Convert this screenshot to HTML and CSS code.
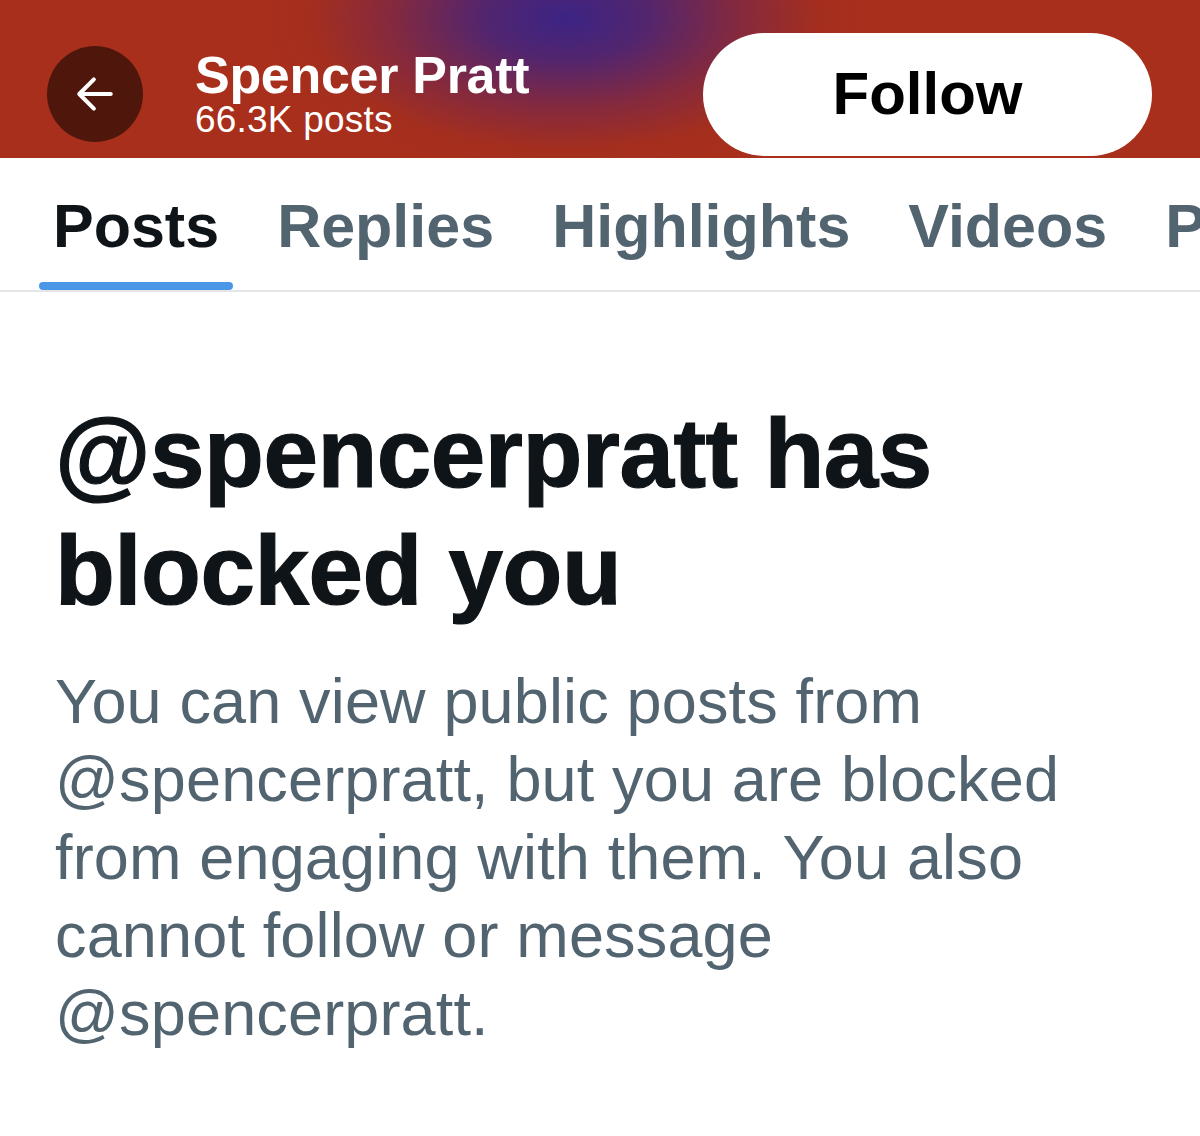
FILE: index.html
```html
<!DOCTYPE html>
<html lang="en">
<head>
<meta charset="utf-8">
<title>Spencer Pratt</title>
<link rel="stylesheet" href="styles.css">
</head>
<body>
<div class="page">
  <header class="topbar">
    <button class="back" aria-label="Back">
      <svg viewBox="0 0 24 24" width="54" height="54" aria-hidden="true">
        <path d="M19 12H5.5M11.5 5.5L5 12l6.5 6.5" fill="none" stroke="#fff" stroke-width="1.8" stroke-linecap="round" stroke-linejoin="round"/>
      </svg>
    </button>
    <div class="who">
      <div class="name">Spencer Pratt</div>
      <div class="count">66.3K posts</div>
    </div>
    <button class="follow">Follow</button>
  </header>

  <nav class="tabs">
    <div class="tab active">Posts<span class="ind"></span></div>
    <div class="tab">Replies</div>
    <div class="tab">Highlights</div>
    <div class="tab">Videos</div>
    <div class="tab">Photos</div>
  </nav>

  <main class="content">
    <h1 class="title">@spencerpratt has<br>blocked you</h1>
    <p class="desc">You can view public posts from<br>@spencerpratt, but you are blocked<br>from engaging with them. You also<br>cannot follow or message<br>@spencerpratt.</p>
  </main>
</div>
</body>
</html>
```

FILE: styles.css
```css
* { box-sizing: border-box; }
html, body { margin: 0; padding: 0; background: #fff; }
body { font-family: "Liberation Sans", Arial, sans-serif; }
.page { width: 1200px; height: 1136px; overflow: hidden; background: #fff; }

.topbar {
  height: 158px;
  display: flex;
  align-items: center;
  padding: 30px 48px 0 47px;
  background:
    radial-gradient(ellipse 320px 165px at 565px 18px, rgba(60,36,132,1) 0%, rgba(72,36,120,0.9) 25%, rgba(110,38,84,0.6) 55%, rgba(150,44,40,0.2) 80%, rgba(168,47,27,0) 100%),
    #a82f1b;
}
.back {
  width: 96px; height: 96px;
  border-radius: 50%;
  border: 0;
  padding: 0;
  background: #4f170b;
  display: flex; align-items: center; justify-content: center;
  flex: none;
}
.who { margin-left: 52px; color: #fff; margin-top: 2px; }
.name { font-size: 52px; font-weight: 700; line-height: 50px; letter-spacing: -0.3px; }
.count { font-size: 37px; line-height: 40px; letter-spacing: 0.2px; }
.follow {
  margin-left: auto;
  width: 449px; height: 123px;
  border: 0;
  border-radius: 62px;
  background: #fff;
  color: #000;
  font-family: "Liberation Sans", Arial, sans-serif;
  font-size: 60px;
  font-weight: 700;
  padding: 0 0 2px 0;
}

.tabs {
  display: flex;
  padding-left: 24px;
  border-bottom: 2px solid #e4e6e8;
  overflow: hidden;
  white-space: nowrap;
}
.tab {
  position: relative;
  flex: none;
  height: 132px;
  padding: 33px 29px 0;
  font-size: 61px;
  line-height: 70px;
  font-weight: 700;
  color: #536471;
}
.tab.active { color: #0f1419; }
.ind {
  position: absolute;
  left: 15px; right: 15px; bottom: 0;
  height: 8px;
  border-radius: 4px;
  background: #4a97e8;
}

.content { padding: 103px 0 0 55px; }
.title {
  margin: 0;
  font-size: 98px;
  line-height: 117px;
  font-weight: 700;
  color: #0f1419;
  letter-spacing: -0.5px;
  -webkit-text-stroke: 1.2px #0f1419;
}
.desc {
  margin: 33px 0 0;
  font-size: 63px;
  line-height: 78px;
  color: #536471;
  letter-spacing: 0.15px;
}
```
